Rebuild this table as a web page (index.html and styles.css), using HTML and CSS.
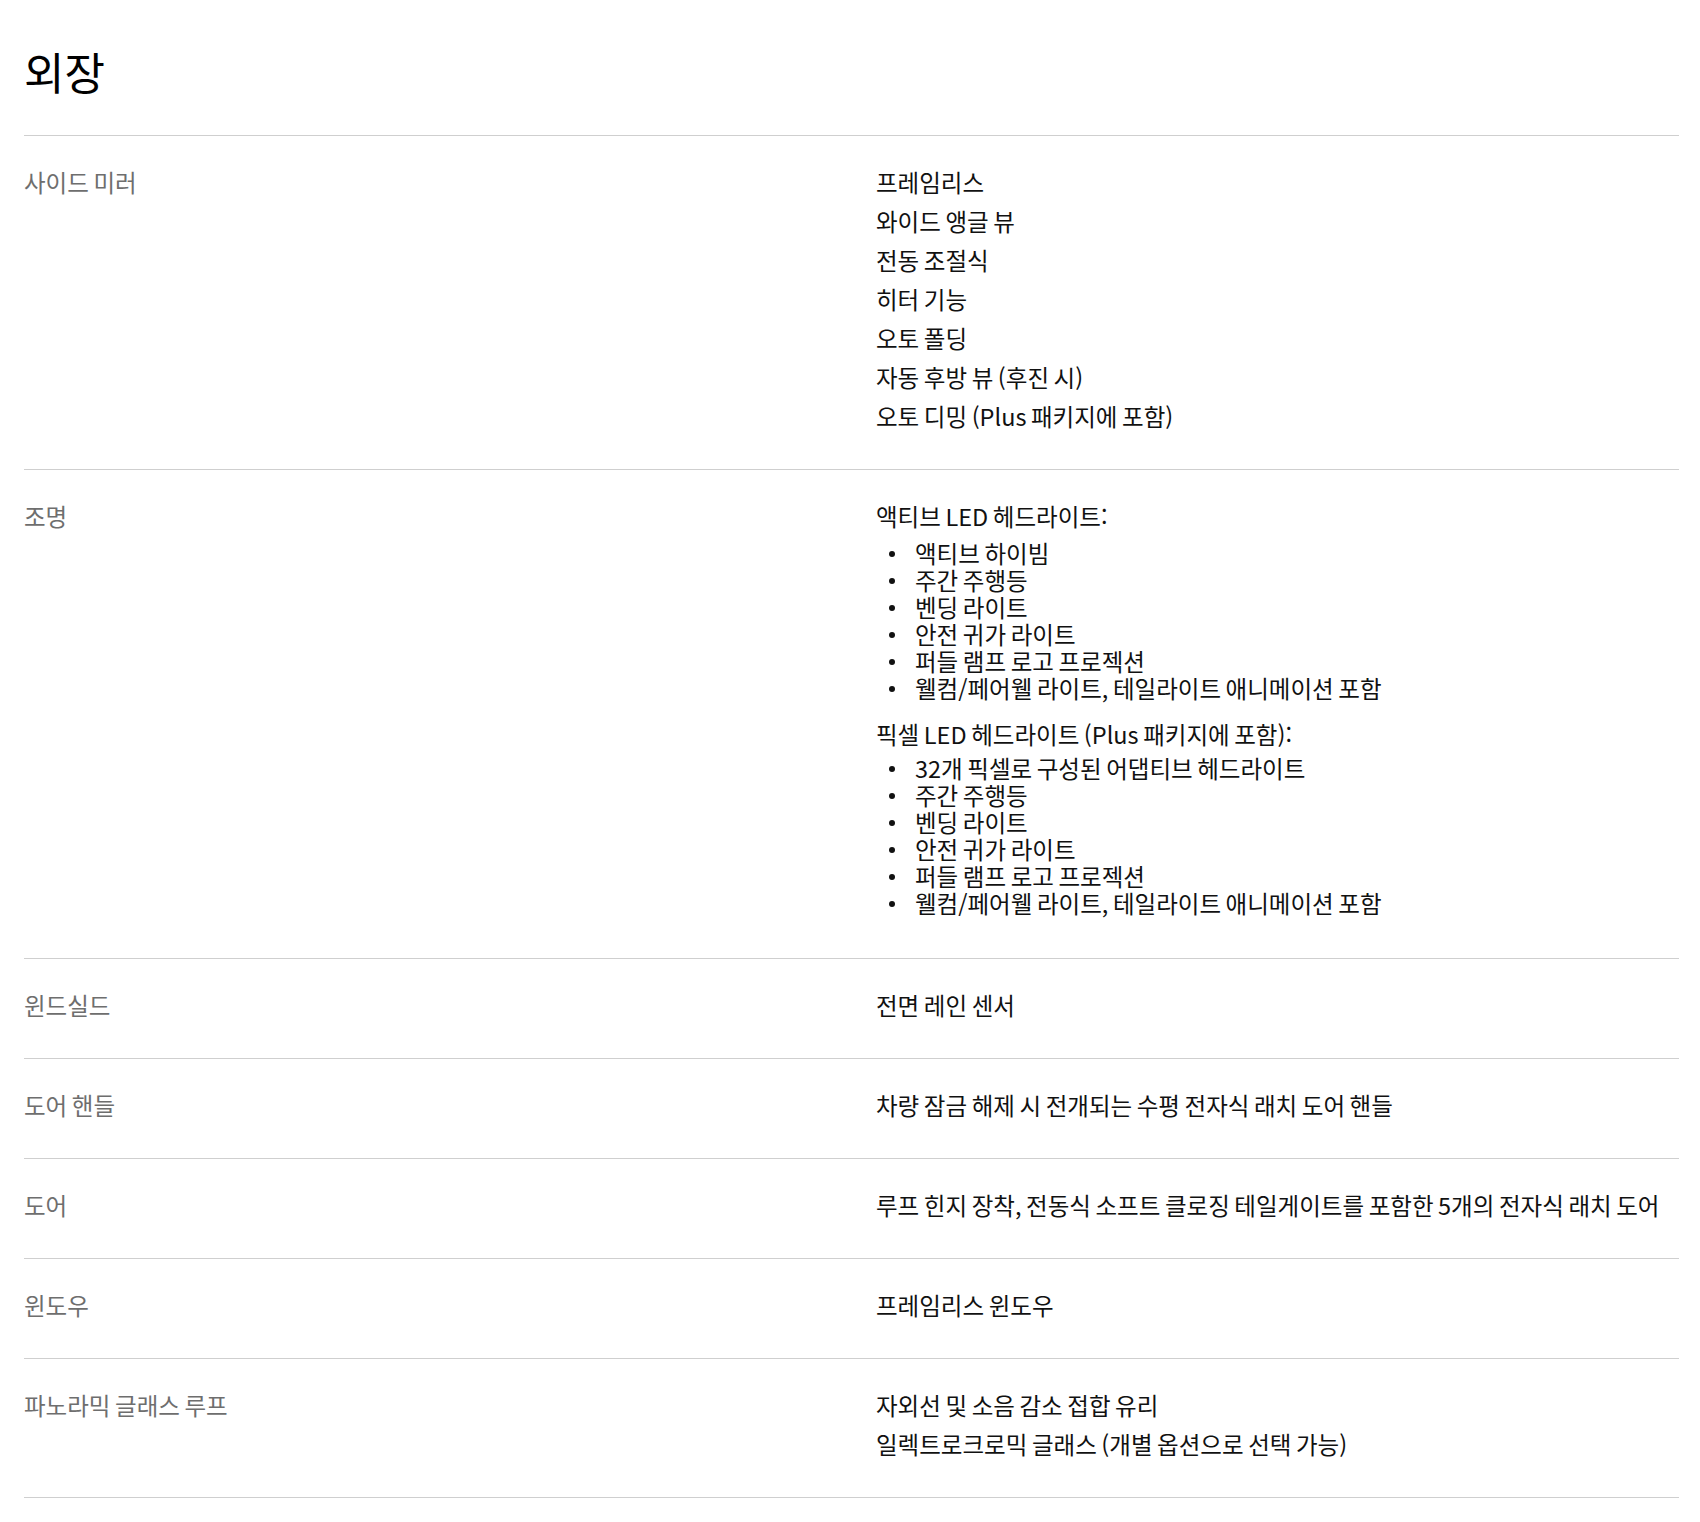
FILE: index.html
```html
<!DOCTYPE html>
<html lang="ko">
<head>
<meta charset="utf-8">
<title>외장</title>
<link rel="stylesheet" href="styles.css">
</head>
<body>
<main class="specs">
  <h1 class="specs-title">외장</h1>

  <div class="spec-row">
    <div class="spec-label">사이드 미러</div>
    <div class="spec-value">
      <p>프레임리스</p>
      <p>와이드 앵글 뷰</p>
      <p>전동 조절식</p>
      <p>히터 기능</p>
      <p>오토 폴딩</p>
      <p>자동 후방 뷰 (후진 시)</p>
      <p>오토 디밍 (Plus 패키지에 포함)</p>
    </div>
  </div>

  <div class="spec-row">
    <div class="spec-label">조명</div>
    <div class="spec-value">
      <p>액티브 LED 헤드라이트:</p>
      <ul class="bullets">
        <li>액티브 하이빔</li>
        <li>주간 주행등</li>
        <li>벤딩 라이트</li>
        <li>안전 귀가 라이트</li>
        <li>퍼들 램프 로고 프로젝션</li>
        <li>웰컴/페어웰 라이트, 테일라이트 애니메이션 포함</li>
      </ul>
      <p>픽셀 LED 헤드라이트 (Plus 패키지에 포함):</p>
      <ul class="bullets">
        <li>32개 픽셀로 구성된 어댑티브 헤드라이트</li>
        <li>주간 주행등</li>
        <li>벤딩 라이트</li>
        <li>안전 귀가 라이트</li>
        <li>퍼들 램프 로고 프로젝션</li>
        <li>웰컴/페어웰 라이트, 테일라이트 애니메이션 포함</li>
      </ul>
    </div>
  </div>

  <div class="spec-row">
    <div class="spec-label">윈드실드</div>
    <div class="spec-value">
      <p>전면 레인 센서</p>
    </div>
  </div>

  <div class="spec-row">
    <div class="spec-label">도어 핸들</div>
    <div class="spec-value">
      <p>차량 잠금 해제 시 전개되는 수평 전자식 래치 도어 핸들</p>
    </div>
  </div>

  <div class="spec-row">
    <div class="spec-label">도어</div>
    <div class="spec-value">
      <p>루프 힌지 장착, 전동식 소프트 클로징 테일게이트를 포함한 5개의 전자식 래치 도어</p>
    </div>
  </div>

  <div class="spec-row">
    <div class="spec-label">윈도우</div>
    <div class="spec-value">
      <p>프레임리스 윈도우</p>
    </div>
  </div>

  <div class="spec-row">
    <div class="spec-label">파노라믹 글래스 루프</div>
    <div class="spec-value">
      <p>자외선 및 소음 감소 접합 유리</p>
      <p>일렉트로크로믹 글래스 (개별 옵션으로 선택 가능)</p>
    </div>
  </div>
</main>
</body>
</html>
```

FILE: styles.css
```css
html, body {
  margin: 0;
  padding: 0;
  background: #ffffff;
}

body {
  font-family: "Noto Sans CJK KR", "Noto Sans", "Liberation Sans", sans-serif;
  color: #111111;
}

.specs {
  margin-left: 24px;
  width: 1655px;
  border-bottom: 1px solid #cfcfcf;
}

.specs-title {
  margin: 0;
  padding: 43px 0 36px;
  font-size: 44px;
  line-height: 56px;
  font-weight: 400;
  color: #000;
}

.spec-row {
  display: grid;
  grid-template-columns: 852px 1fr;
  border-top: 1px solid #cfcfcf;
  padding: 27px 0 33px;
}

.spec-label,
.spec-value {
  font-size: 23.5px;
  line-height: 39px;
  word-spacing: -2px;
}

.spec-label {
  color: #6e6e6e;
}

.spec-value {
  color: #111111;
}

.spec-value p {
  margin: 0;
}

.bullets {
  list-style: none;
  margin: 4px 0 13px;
  padding: 0;
  line-height: 27px;
}

.bullets + p + .bullets {
  margin-top: 1px;
}

.bullets:last-child {
  margin-bottom: 8px;
}

.bullets li {
  display: flex;
  align-items: center;
}

.bullets li::before {
  content: "";
  flex: none;
  width: 6px;
  height: 6px;
  border-radius: 50%;
  background: #111111;
  margin: 0 20px 0 13px;
}
```
